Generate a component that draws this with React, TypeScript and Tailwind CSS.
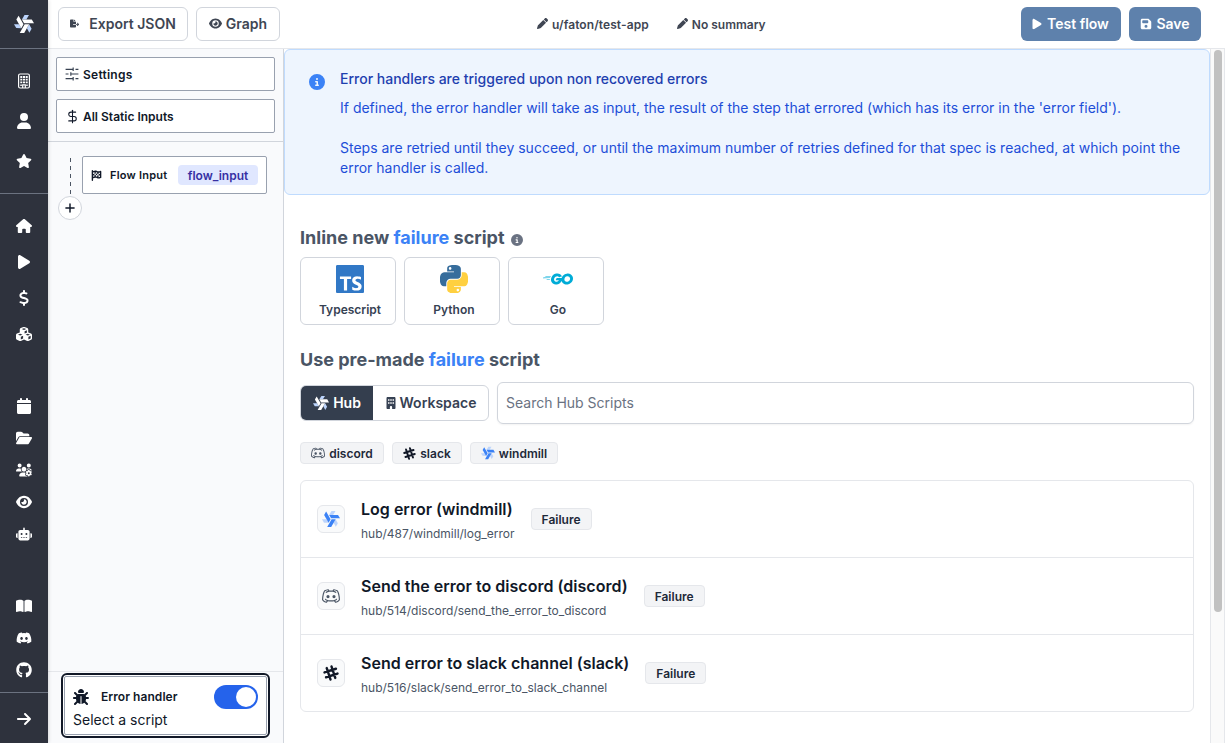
import type { ReactNode } from "react";
import {
  FaArrowRight, FaBookOpen, FaBug, FaBuilding, FaCalendar, FaCubes, FaDiscord, FaDollarSign, FaEye, FaFileExport, FaFlagCheckered,
  FaFloppyDisk, FaFolderOpen, FaGithub, FaHouse, FaCircleInfo, FaPen, FaPlay, FaRobot, FaStar, FaUser, FaUsersGear,
} from "react-icons/fa6";
import { RxDiscordLogo } from "react-icons/rx";
import { SiGo, SiTypescript } from "react-icons/si";
import { DollarSign, Plus } from "lucide-react";

function Windmill({ size, main, light }: { size: number; main: string; light: string }) {
  return (
    <svg width={size} height={size} viewBox="0 0 256 256" className="shrink-0">
      {[0, 120, 240].map((angle) => (
        <g key={angle} transform={`rotate(${angle} 129.5 127.8)`}>
          <path fill={light} d="M134.78 14.22 101.33 69.75h56.89l33.45-55.53z" />
          <path fill={main} d="M101.33 69.75h126.22L256 119.02H129.78z" />
        </g>
      ))}
    </svg>
  );
}

function Slack({ size }: { size: number }) {
  return (
    <svg width={size} height={size} viewBox="0 0 24 24" className="shrink-0" fill="none" stroke="#111827" strokeWidth="3.6" strokeLinecap="round">
      <g transform="rotate(-18 12 12)">
        <path d="M8.2 3v18M15.8 3v18M3 8.2h18M3 15.8h18" />
      </g>
    </svg>
  );
}

function Sliders() {
  return (
    <svg width="14" height="14" viewBox="0 0 24 24" className="shrink-0" fill="none" stroke="#374151" strokeWidth="2">
      <path d="M1 4h13M18 4h5M14 1v6M1 12h5M10 12h13M10 9v6M1 20h13M18 20h5M14 17v6" />
    </svg>
  );
}

function OfficeBuilding() {
  return (
    <svg width="16" height="16" viewBox="0 0 16 16" fill="none" stroke="currentColor">
      <rect x="2.6" y="1" width="10.800" height="14" rx="1.500" strokeWidth="1.200" />
      <path d="M4.300 4h2M7 4h2M9.700 4h2M4.300 6.700h2M7 6.700h2M9.700 6.700h2M4.300 9.400h2M7 9.400h2M9.700 9.400h2" strokeWidth="1.800" />
      <path d="M4.300 12.200h1.500M10.200 12.200h1.500" strokeWidth="1.500" />
      <path d="M6.700 15v-3.200h2.600V15" strokeWidth="1.200" />
    </svg>
  );
}

function Python() {
  return (
    <svg width="28" height="28" viewBox="0 0 110 110">
      <path fill="#366d9c" d="M54.4 0C49.8 0 45.4.4 41.6 1.1 30.2 3.1 28.1 7.300 28.100 15v10.200h27v3.400H18C10.100 28.600 3.300 33.300 1.100 42.200c-2.500 10.300-2.600 16.700 0 27.500C3 77.700 7.600 83.400 15.400 83.400h9.300V71c0-8.900 7.700-16.800 16.900-16.800h26.900c7.500 0 13.500-6.200 13.500-13.700V15c0-7.300-6.200-12.800-13.500-13.900C63.900.3 59 0 54.400 0zM39.800 8.200c2.800 0 5.100 2.300 5.100 5.200s-2.300 5.100-5.100 5.100-5.100-2.300-5.100-5.100 2.300-5.200 5.100-5.200z" />
      <path fill="#ffd040" d="M85.300 28.600v11.900c0 9.300-7.900 17-16.800 17H41.600C34.200 57.500 28.100 63.800 28.100 71.100v25.600c0 7.300 6.300 11.600 13.500 13.700 8.500 2.500 16.700 3 26.900 0 6.800-2 13.500-5.900 13.500-13.700V86.500H55v-3.400h40.500c7.900 0 10.800-5.500 13.500-13.700 2.800-8.500 2.700-16.600 0-27.400-1.900-7.800-5.600-13.400-13.500-13.400zM70.200 93.400c2.800 0 5.100 2.300 5.100 5.100 0 2.900-2.300 5.200-5.100 5.200s-5.100-2.300-5.100-5.200c0-2.800 2.300-5.100 5.100-5.100z" />
    </svg>
  );
}

function NavItem({ h, children }: { h: string; children: ReactNode }) {
  return <a className={`flex shrink-0 items-center justify-center ${h}`}>{children}</a>;
}

function Sidebar() {
  return (
    <nav className="z-10 flex w-12 shrink-0 flex-col bg-[#2e323d] text-base text-white shadow-[0_0_4px_rgba(0,0,0,0.2)]">
      <div className="flex h-[49px] items-center justify-center border-b border-[#6b7280]">
        <Windmill size={20} main="#ffffff" light="#bcd4fc" />
      </div>
      <div className="flex h-[145px] flex-col border-b border-[#6b7280] pt-3">
        <NavItem h="h-10"><OfficeBuilding /></NavItem>
        <NavItem h="h-10"><FaUser /></NavItem>
        <NavItem h="h-10"><FaStar /></NavItem>
      </div>
      <div className="flex flex-col pt-[14px]">
        <NavItem h="h-9"><FaHouse /></NavItem>
        <NavItem h="h-9"><FaPlay /></NavItem>
        <NavItem h="h-9"><FaDollarSign /></NavItem>
        <NavItem h="h-9"><FaCubes /></NavItem>
      </div>
      <div className="mt-[38px] flex flex-col">
        <NavItem h="h-8"><FaCalendar /></NavItem>
        <NavItem h="h-8"><FaFolderOpen /></NavItem>
        <NavItem h="h-8"><FaUsersGear /></NavItem>
        <NavItem h="h-8"><FaEye /></NavItem>
        <NavItem h="h-8"><FaRobot /></NavItem>
      </div>
      <div className="mt-10 flex flex-col">
        <NavItem h="h-8"><FaBookOpen /></NavItem>
        <NavItem h="h-8"><FaDiscord /></NavItem>
        <NavItem h="h-8"><FaGithub /></NavItem>
      </div>
      <div className="mt-[6px] flex flex-1 items-center justify-center border-t border-[#6b7280] pt-[2px]">
        <FaArrowRight />
      </div>
    </nav>
  );
}

function Header() {
  return (
    <header className="flex h-[49px] shrink-0 items-center border-b border-gray-200 pb-px pl-[10px] pr-6 text-[#3f4653]">
      <button className="flex h-[34px] w-[130px] items-center justify-center gap-[10px] rounded-md border border-gray-300 text-sm font-semibold">
        <FaFileExport className="text-[9px]" />Export JSON
      </button>
      <button className="ml-2 flex h-[34px] w-[84px] items-center justify-center gap-1 rounded-md border border-gray-300 text-sm font-semibold">
        <FaEye className="text-[13px]" />Graph
      </button>
      <div className="ml-[257px] flex items-center gap-1 pt-[2px] text-xs font-semibold"><FaPen className="mb-[2px] text-[11px]" /><span className="tracking-[0.007em]">u/faton/test-app</span></div>
      <div className="ml-7 flex items-center gap-1 pt-[2px] text-xs font-semibold"><FaPen className="mb-[2px] text-[11px]" />No summary</div>
      <button className="ml-auto flex h-[34px] w-[100px] items-center justify-center gap-1 rounded-md bg-[#5e81ac] pr-[2px] text-sm font-semibold text-white">
        <FaPlay className="text-[12px]" />Test flow
      </button>
      <button className="ml-2 flex h-[34px] w-[72px] items-center justify-center gap-1 rounded-md bg-[#5e81ac] text-sm font-semibold text-white">
        <FaFloppyDisk className="text-[12px]" />Save
      </button>
    </header>
  );
}

function FlowPanel() {
  return (
    <aside className="flex w-[236px] shrink-0 flex-col border-r border-gray-300 bg-[#f9fafc] text-xs text-gray-900">
      <div className="flex h-[93px] shrink-0 flex-col gap-2 border-b border-gray-300 p-2 font-semibold">
        <div className="flex h-[34px] items-center gap-1 rounded-xs border border-gray-400 bg-white pl-[8px]">
          <Sliders /><span className="pt-[2px] tracking-[0.02em]">Settings</span>
        </div>
        <div className="flex h-[34px] items-center gap-[3px] rounded-xs border border-gray-400 bg-white pl-[8px]">
          <DollarSign size={15} strokeWidth={1.7} /><span className="pt-[2px]">All Static Inputs</span>
        </div>
      </div>
      <div className="flex flex-1 items-start pl-[10px] pt-[14px]">
        <div className="flex w-6 flex-col items-center">
          <svg width="1" height="38" className="mt-[2px]">
            <path d="M.5 0v38" stroke="#4b5563" strokeDasharray="4 4" />
          </svg>
          <div className="flex size-6 items-center justify-center rounded-full border border-gray-300 bg-white">
            <Plus size={14} strokeWidth={2.5} />
          </div>
        </div>
        <div className="flex h-[38px] w-[185px] items-center rounded-xs border border-gray-400 bg-white pl-2 pr-2">
          <FaFlagCheckered className="text-[11px]" />
          <span className="ml-2 text-[11px] font-semibold tracking-[0.02em]">Flow Input</span>
          <span className="ml-auto flex h-5 w-20 items-center justify-center rounded bg-[#e0e7ff] pt-px font-semibold text-[#3730a3]">flow_input</span>
        </div>
      </div>
      <div className="flex h-[72px] shrink-0 border-t border-gray-200 pl-[13px] pt-px">
        <div className="h-[65px] w-[209px] rounded-md border-2 border-[#111827] bg-white p-px">
          <div className="flex h-full flex-col rounded-xs border border-gray-400 pl-2 pr-2 pt-2">
            <div className="flex h-6 items-center">
              <FaBug className="text-base" />
              <span className="ml-3 font-semibold tracking-[0.005em]">Error handler</span>
              <span className="ml-auto flex h-6 w-11 items-center justify-end rounded-full bg-[#2563eb] p-[2px]">
                <span className="size-5 rounded-full bg-white" />
              </span>
            </div>
            <div className="text-sm leading-[22px]">Select a script</div>
          </div>
        </div>
      </div>
    </aside>
  );
}

function Lang({ icon, name }: { icon: ReactNode; name: string }) {
  return (
    <button className="flex h-[68px] w-24 flex-col items-center rounded-md border border-gray-300 pl-1 pt-[7px] text-xs font-semibold text-gray-700">
      <span className="flex h-7 items-center">{icon}</span>
      <span className="mt-[7px] leading-5">{name}</span>
    </button>
  );
}

function Chip({ w, icon, name }: { w: string; icon: ReactNode; name: string }) {
  return (
    <span className={`flex h-[22px] items-center justify-center gap-1 rounded border border-gray-200 bg-gray-100 text-xs font-semibold text-gray-800 ${w}`}>
      {icon}<span className="pt-[2px]">{name}</span>
    </span>
  );
}

function Script({ icon, title, path, last }: { icon: ReactNode; title: string; path: string; last?: boolean }) {
  return (
    <div className={`flex items-center pl-4 ${last ? "h-[76px]" : "h-[77px] border-b border-gray-200"}`}>
      <span className="flex size-7 items-center justify-center rounded-md border border-gray-200 bg-gray-50">{icon}</span>
      <div className="ml-4 pt-[2px]">
        <div className="text-base font-semibold leading-6 tracking-[0.001em] text-gray-900">{title}</div>
        <div className="mt-[3px] text-xs leading-5 text-gray-600">{path}</div>
      </div>
      <span className="ml-4 flex h-[22px] w-[61px] items-center justify-center rounded border border-gray-200 bg-gray-100 pt-[2px] text-xs font-semibold text-gray-800">Failure</span>
    </div>
  );
}

function Main() {
  return (
    <main className="flex w-[926px] shrink-0 flex-col">
      <div className="flex h-[146px] shrink-0 rounded-md border border-[#bfdbfe] bg-[#eef5fe] pl-6 pt-[19px] text-sm text-[#1d4ed8]">
        <FaCircleInfo className="mt-[5px] shrink-0 text-base text-[#3b82f6]" />
        <div className="ml-[15px]">
          <div className="font-medium leading-5 text-[#1e40af]">Error handlers are triggered upon non recovered errors</div>
          <p className="mt-[9px] leading-5">If defined, the error handler will take as input, the result of the step that errored (which has its error in the 'error field').</p>
          <p className="mt-5 w-[850px] leading-5">Steps are retried until they succeed, or until the maximum number of retries defined for that spec is reached, at which point the error handler is called.</p>
        </div>
      </div>
      <div className="flex flex-col pl-4 pr-4 pt-[29px]">
        <h2 className="flex h-7 items-center text-lg font-bold text-gray-600">
          <span>Inline new <span className="text-[#3b82f6]">failure</span> script</span>
          <FaCircleInfo className="ml-[6px] mt-[3px] text-xs text-gray-500" />
        </h2>
        <div className="mt-[5px] flex gap-2">
          <Lang name="Typescript" icon={<SiTypescript className="bg-white text-[28px] text-[#3178c6]" />} />
          <Lang name="Python" icon={<Python />} />
          <Lang name="Go" icon={<SiGo className="text-[30px] text-[#00acd7]" />} />
        </div>
        <h2 className="mt-[21px] h-7 text-lg font-bold leading-7 text-gray-600">Use pre-made <span className="text-[#3b82f6]">failure</span> script</h2>
        <div className="mt-[8px] flex items-center">
          <div className="flex h-9 w-[189px] overflow-hidden rounded-md border border-gray-300 text-sm font-semibold text-gray-700">
            <span className="flex w-[72px] items-center justify-center gap-1 bg-[#343e4e] text-white">
              <Windmill size={16} main="#ffffff" light="#bcd4fc" />Hub
            </span>
            <span className="flex flex-1 items-center justify-center gap-[3px]"><FaBuilding className="text-[12px]" />Workspace</span>
          </div>
          <div className="ml-2 flex h-[42px] flex-1 items-center rounded-md border border-gray-300 pl-2 text-sm text-gray-500 shadow-xs">Search Hub Scripts</div>
        </div>
        <div className="mt-[18px] flex gap-2">
          <Chip w="w-[84px]" name="discord" icon={<RxDiscordLogo className="text-[14px] text-gray-600" />} />
          <Chip w="w-[70px]" name="slack" icon={<Slack size={13} />} />
          <Chip w="w-[88px]" name="windmill" icon={<Windmill size={14} main="#3b82f6" light="#bcd4fc" />} />
        </div>
        <div className="mt-4 rounded-md border border-gray-200">
          <Script title="Log error (windmill)" path="hub/487/windmill/log_error" icon={<Windmill size={18} main="#3b82f6" light="#bcd4fc" />} />
          <Script title="Send the error to discord (discord)" path="hub/514/discord/send_the_error_to_discord" icon={<RxDiscordLogo className="text-[18px] text-gray-600" />} />
          <Script last title="Send error to slack channel (slack)" path="hub/516/slack/send_error_to_slack_channel" icon={<Slack size={16} />} />
        </div>
      </div>
    </main>
  );
}

export default function App() {
  return (
    <div className="flex h-[743px] w-[1225px] overflow-hidden bg-white font-['Inter',sans-serif]">
      <Sidebar />
      <div className="flex min-w-0 flex-1 flex-col">
        <Header />
        <div className="flex min-h-0 flex-1">
          <FlowPanel />
          <Main />
          <div className="flex flex-1 justify-center border-x border-gray-200 bg-[#fafafa] pt-px">
            <div className="h-[562px] w-2 rounded-full bg-[#c1c1c1]" />
          </div>
        </div>
      </div>
    </div>
  );
}
